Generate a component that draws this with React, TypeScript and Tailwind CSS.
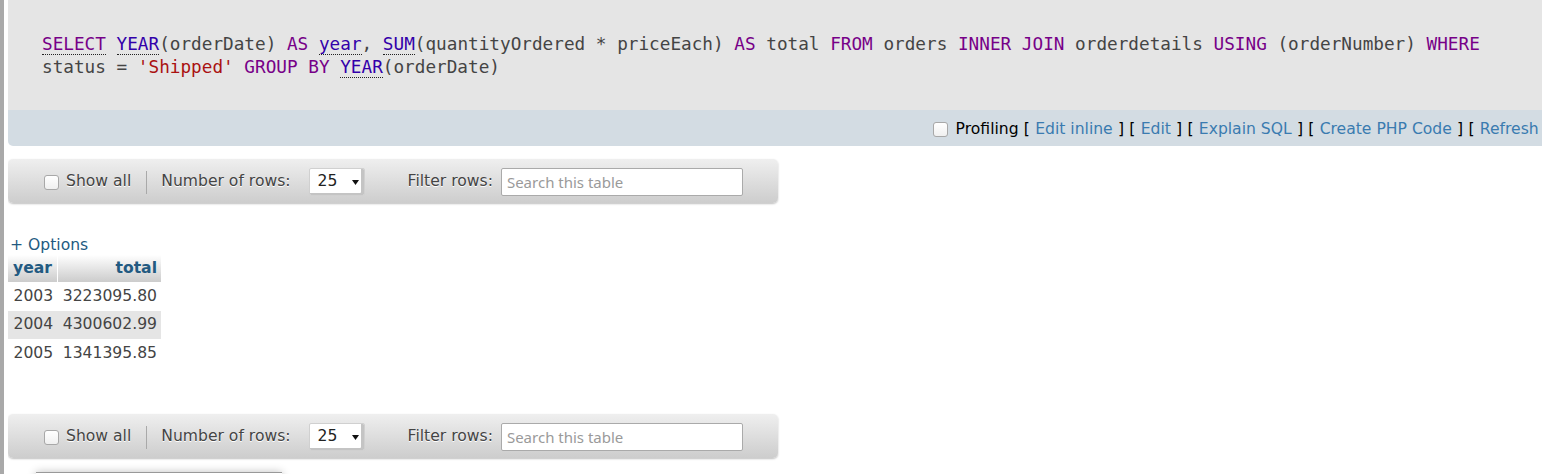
import React from "react";

const sans = { fontFamily: '"DejaVu Sans", sans-serif' };

function Box() {
  return (
    <span className="inline-block w-[15px] h-[15px] rounded-[3px] border border-[#a8a8a8] bg-linear-to-b from-[#ffffff] to-[#f0f0f0] shrink-0" />
  );
}

function Doc({ c, children }: { c: string; children: React.ReactNode }) {
  return <span className={`${c} border-b border-dotted border-[#222]`}>{children}</span>;
}

function Bar() {
  return (
    <div className="w-[770px] h-[44px] shrink-0 rounded-[5px] bg-linear-to-b from-[#efefef] to-[#cdcdcd] shadow-[0_1px_2px_rgba(0,0,0,0.25)] flex items-center pl-[36px] pt-[2px] text-[15.6px] text-[#444] [text-shadow:0_1px_0_#fff]">
      <Box />
      <span className="ml-[7px]">Show all</span>
      <span className="ml-[15px] w-px h-[23px] bg-[#a9a9a9]" />
      <span className="ml-[14px]">Number of rows:</span>
      <div className="ml-[18px] relative w-[56px] h-[28px] bg-white border border-[#d0d0d0] rounded-[2px] shadow-[inset_-3px_-2px_0_#c4c4c4] flex items-center pl-[8px] text-[#222] [text-shadow:none]">
        25
        <svg className="absolute right-[5px] top-[11px]" width="7" height="5" viewBox="0 0 7 5">
          <path d="M0 0 H7 L3.5 5 Z" fill="#111" />
        </svg>
      </div>
      <span className="ml-[43px]">Filter rows:</span>
      <div
        className="ml-[8px] w-[242px] h-[28px] bg-white border border-[#aaa] rounded-[2px] flex items-center pl-[5px] text-[15px] text-[#9a9a9a] [text-shadow:none]"
        style={{ fontFamily: '"Noto Sans", sans-serif' }}
      >
        Search this table
      </div>
    </div>
  );
}

export default function App() {
  const kw = "text-[#770088]";
  const fn = "text-[#3300aa]";
  const m = "ml-[5.25px]";
  const link = "ml-[5.25px] text-[#3a7bb0]";
  return (
    <div className="w-[1542px] h-[474px] overflow-hidden bg-white flex" style={sans}>
      <div className="w-[4px] bg-[#a9a9a9] shrink-0" />
      <div className="ml-[4px] flex-1 min-w-0 overflow-hidden flex flex-col">
        <div
          className="h-[110px] shrink-0 bg-[#e5e5e5] pl-[34px] pt-[33px] text-[17.7px] leading-[23px] text-[#444] whitespace-nowrap"
          style={{ fontFamily: '"DejaVu Sans Mono", monospace' }}
        >
          <div>
            <Doc c={kw}>SELECT</Doc> <Doc c={fn}>YEAR</Doc>(orderDate) <span className={kw}>AS</span>{" "}
            <Doc c={fn}>year</Doc>, <Doc c={fn}>SUM</Doc>(quantityOrdered * priceEach){" "}
            <span className={kw}>AS</span> total <span className={kw}>FROM</span> orders{" "}
            <span className={kw}>INNER JOIN</span> orderdetails <span className={kw}>USING</span> (orderNumber){" "}
            <span className={kw}>WHERE</span>
          </div>
          <div>
            status = <span className="text-[#aa1111]">'Shipped'</span> <span className={kw}>GROUP BY</span>{" "}
            <Doc c={fn}>YEAR</Doc>(orderDate)
          </div>
        </div>
        <div className="h-[36px] shrink-0 bg-[#d3dce3] rounded-bl-[5px] flex items-center justify-end -mr-[8px] pt-[3px] text-[15.6px] text-[#000] whitespace-nowrap">
          <Box />
          <span className="ml-[8px]">Profiling</span>
          <span className={m}>[</span>
          <span className={link}>Edit inline</span>
          <span className={m}>]</span>
          <span className={m}>[</span>
          <span className={link}>Edit</span>
          <span className={m}>]</span>
          <span className={m}>[</span>
          <span className={link}>Explain SQL</span>
          <span className={m}>]</span>
          <span className={m}>[</span>
          <span className={link}>Create PHP Code</span>
          <span className={m}>]</span>
          <span className={m}>[</span>
          <span className={link}>Refresh</span>
          <span className={m}>]</span>
        </div>
        <div className="mt-[13px] shrink-0">
          <Bar />
        </div>
        <div className="mt-[32px] ml-[2px] h-[20px] shrink-0 leading-[20px] text-[15.6px] text-[#235a81]">+ Options</div>
        <table className="shrink-0 text-[15.6px] text-[#444] border-separate border-spacing-0 w-[153px]">
          <thead>
            <tr className="h-[27px]">
              <th className="px-[5px] text-left font-bold text-[#235a81] bg-linear-to-b from-[#ffffff] to-[#cccccc] border-r border-white">
                year
              </th>
              <th className="px-[4px] text-right font-bold text-[#235a81] bg-linear-to-b from-[#ffffff] to-[#cccccc]">
                total
              </th>
            </tr>
          </thead>
          <tbody>
            <tr className="h-[29px]">
              <td className="px-[5px] text-right">2003</td>
              <td className="px-[4px] text-right">3223095.80</td>
            </tr>
            <tr className="h-[28px] bg-[#e5e5e5]">
              <td className="px-[5px] text-right">2004</td>
              <td className="px-[4px] text-right">4300602.99</td>
            </tr>
            <tr className="h-[29px]">
              <td className="px-[5px] text-right">2005</td>
              <td className="px-[4px] text-right">1341395.85</td>
            </tr>
          </tbody>
        </table>
        <div className="mt-[46px] shrink-0">
          <Bar />
        </div>
        <div className="mt-[14px] ml-[28px] w-[246px] h-[20px] border-t border-[#999] bg-white shadow-[0_0_8px_rgba(0,0,0,0.25)] shrink-0" />
      </div>
    </div>
  );
}
